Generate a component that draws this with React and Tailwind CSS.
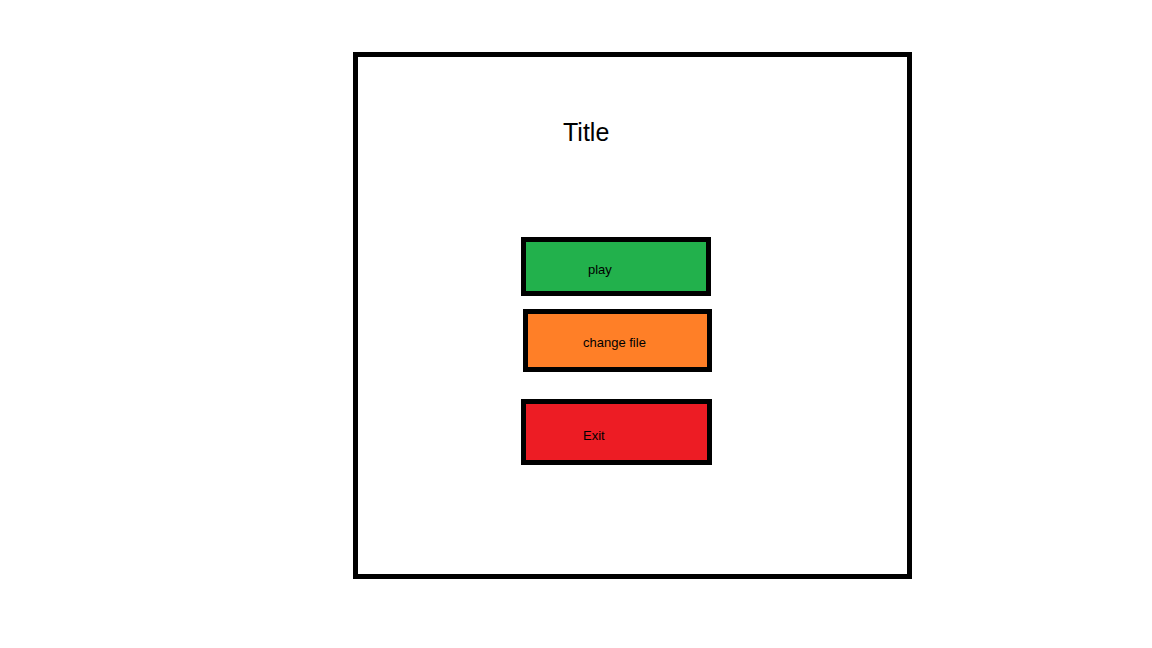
import React from 'react'

// ─── Menu button ──────────────────────────────────────────────────────────────
function MenuButton({ label, className }) {
  return (
    <div
      role="button"
      className={`border-[5px] border-black text-[13px] leading-4 text-black ${className}`}
    >
      {label}
    </div>
  )
}

export default function App() {
  return (
    <div
      className="w-[1152px] h-[648px] bg-white overflow-hidden pt-[52px] pl-[353px]"
      style={{ fontFamily: '"Liberation Sans", Arial, sans-serif' }}
    >
      <div className="w-[559px] h-[527px] border-[5px] border-black flex flex-col items-start">
        <h1 className="ml-[205px] mt-[61px] text-[25px] leading-[28px] text-black">Title</h1>

        <MenuButton
          label="play"
          className="ml-[163px] mt-[91px] w-[190px] h-[59px] bg-[#22b14c] pl-[62px] pt-[20px]"
        />
        <MenuButton
          label="change file"
          className="ml-[165px] mt-[13px] w-[189px] h-[63px] bg-[#ff7f27] pl-[55px] pt-[21px]"
        />
        <MenuButton
          label="Exit"
          className="ml-[163px] mt-[27px] w-[191px] h-[66px] bg-[#ed1c24] pl-[57px] pt-[24px]"
        />
      </div>
    </div>
  )
}
